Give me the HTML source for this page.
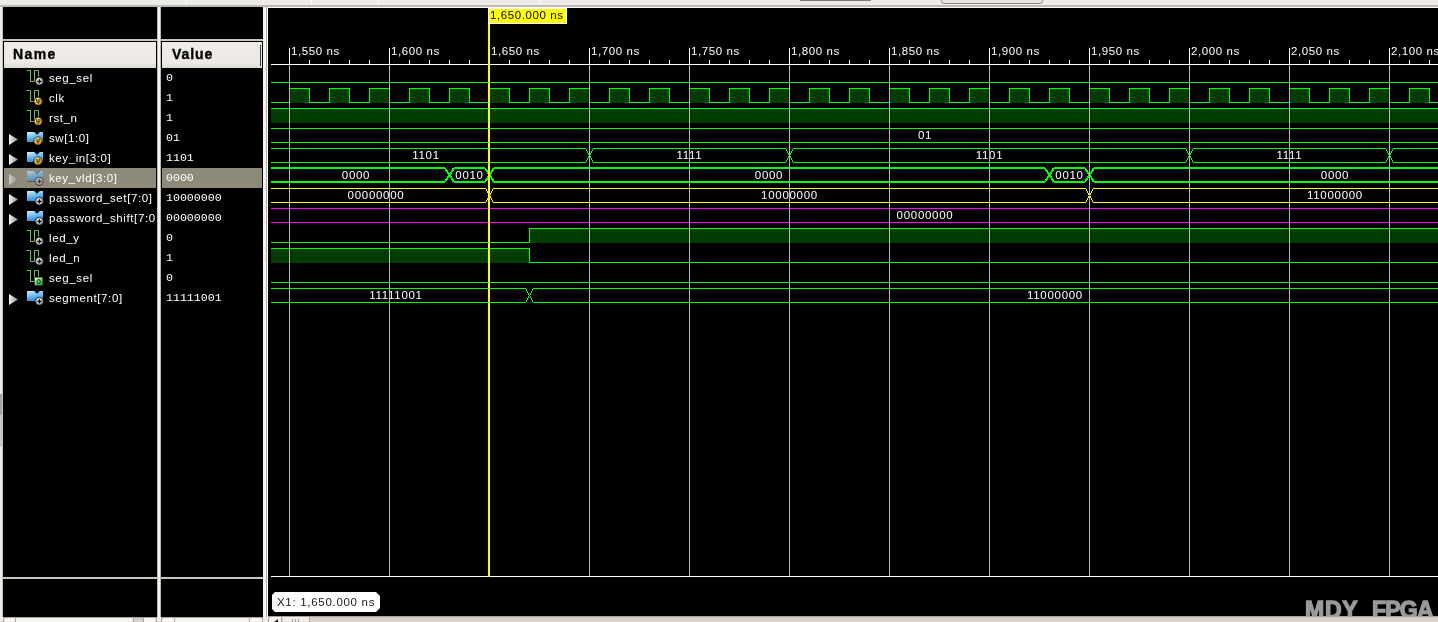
<!DOCTYPE html>
<html><head><meta charset="utf-8"><style>
html,body{margin:0;padding:0;background:#edebe7;}
body{width:1438px;height:622px;position:relative;overflow:hidden;will-change:transform;background:#edebe7;font-family:"Liberation Sans",sans-serif;}
.a{position:absolute;}
.blk{position:absolute;background:#000;}
.hdr{position:absolute;background:linear-gradient(#efece8 0%,#edeae6 80%,#dcd8d2 100%);border:1px solid #000;box-sizing:border-box;font-weight:bold;font-size:14px;color:#000;-webkit-text-stroke:0.35px #000;}
.nm{position:absolute;left:49px;height:20px;line-height:20px;font-size:11.5px;letter-spacing:0.6px;color:#fff;white-space:pre;}
.vl{position:absolute;left:166px;height:20px;line-height:20px;font-family:"Liberation Mono",monospace;font-size:11.6px;color:#fff;white-space:pre;}
.ic{position:absolute;}
.tl{position:absolute;top:43px;height:16px;line-height:16px;font-size:11.5px;letter-spacing:0.6px;color:#fff;white-space:pre;}
.bl{font-family:"Liberation Sans",sans-serif;font-size:11.5px;letter-spacing:0.7px;fill:#fff;}
</style></head><body>
<!-- top band -->
<div class="a" style="left:0;top:0;width:1438px;height:6px;background:#edebe7"></div>
<div class="a" style="left:0;top:5px;width:1438px;height:2px;background:#bdb9b3"></div>
<div class="a" style="left:186px;top:0;width:1px;height:5px;background:#fbfaf8"></div>
<div class="a" style="left:311px;top:0;width:1px;height:5px;background:#fbfaf8"></div>
<div class="a" style="left:378px;top:0;width:1px;height:5px;background:#fbfaf8"></div>
<div class="a" style="left:539px;top:0;width:1px;height:5px;background:#fbfaf8"></div>
<div class="a" style="left:800px;top:0;width:71px;height:1px;background:#7d7a74"></div>
<div class="a" style="left:941px;top:-4px;width:100px;height:6px;border:1px solid #8f8b85;border-radius:3px;background:#e8e5e0"></div>

<!-- left window edge -->
<div class="a" style="left:0;top:394px;width:2px;height:21px;background:#aaa69f"></div>
<div class="a" style="left:0;top:415px;width:2px;height:32px;background:#cdc9c3"></div>
<div class="a" style="left:2px;top:7px;width:1px;height:610px;background:#c8c4be"></div>

<!-- Name panel -->
<div class="blk" style="left:3px;top:7px;width:154px;height:610px"></div>
<div class="a" style="left:3px;top:39px;width:154px;height:2px;background:#c8c4be"></div>
<div class="hdr" style="left:3px;top:41px;width:154px;height:28px;"><span class="a" style="left:9px;top:4px;letter-spacing:1.4px">Name</span></div>
<div class="a" style="left:3px;top:577px;width:154px;height:2px;background:#c8c4be"></div>
<!-- separator -->
<div class="a" style="left:157px;top:7px;width:4px;height:611px;background:linear-gradient(90deg,#bdb9b3 0,#bdb9b3 25%,#f5f3f0 25%,#f5f3f0 75%,#bdb9b3 75%)"></div>

<!-- Value panel -->
<div class="blk" style="left:161px;top:7px;width:102px;height:610px"></div>
<div class="a" style="left:161px;top:39px;width:102px;height:2px;background:#c8c4be"></div>
<div class="hdr" style="left:161px;top:41px;width:102px;height:28px;"><span class="a" style="left:10px;top:4px;letter-spacing:0.9px">Value</span></div>
<div class="a" style="left:260px;top:45px;width:1px;height:21px;background:#3a3a3a"></div>
<div class="a" style="left:161px;top:577px;width:102px;height:2px;background:#c8c4be"></div>
<!-- separator 2 -->
<div class="a" style="left:263px;top:7px;width:3px;height:610px;background:#f5f3f0"></div>
<div class="a" style="left:266px;top:7px;width:1px;height:610px;background:#b0aca6"></div>

<svg width="0" height="0" style="position:absolute"><defs><radialGradient id="gy" cx="0.3" cy="0.25" r="0.8"><stop offset="0" stop-color="#ffffff"/><stop offset="0.35" stop-color="#ffd84a"/><stop offset="1" stop-color="#e89800"/></radialGradient><radialGradient id="gs" cx="0.35" cy="0.3" r="0.8"><stop offset="0" stop-color="#f4f4f4"/><stop offset="0.6" stop-color="#b8b8b8"/><stop offset="1" stop-color="#7a7a7a"/></radialGradient><linearGradient id="gg" x1="0" y1="0" x2="0.6" y2="1"><stop offset="0" stop-color="#f0fff0"/><stop offset="0.5" stop-color="#7ee07e"/><stop offset="1" stop-color="#22b822"/></linearGradient><linearGradient id="gb" x1="0" y1="0" x2="0.3" y2="1"><stop offset="0" stop-color="#d6f2ff"/><stop offset="0.45" stop-color="#7cc4f4"/><stop offset="1" stop-color="#2e90e0"/></linearGradient><linearGradient id="gt" x1="0" y1="0" x2="1" y2="0"><stop offset="0" stop-color="#f4f4f4"/><stop offset="1" stop-color="#8c8c8c"/></linearGradient></defs></svg>
<!-- selection -->
<div class="a" style="left:4px;top:168px;width:152px;height:20px;background:#8e8a79"></div>
<div class="a" style="left:162px;top:168px;width:100px;height:20px;background:#8e8a79"></div>

<div class="a" style="left:0;top:0;width:155px;height:622px;overflow:hidden"><svg class="ic" style="left:20px;top:68px" width="30" height="20"><path d="M7,2.5 L10.5,2.5 L10.5,13.5 L14.5,13.5 L14.5,2.5 L18.5,2.5 L18.5,8.5" fill="none" stroke="#6cc050" stroke-width="1"/><circle cx="19.4" cy="13.3" r="4.6" fill="#000" opacity="0.55"/><circle cx="19.4" cy="13.3" r="3.8" fill="url(#gs)" stroke="#303030" stroke-width="0.6"/><path d="M17.4,13.3 L21.4,13.3 M19.4,11.3 L19.4,15.3" stroke="#000" stroke-width="1.3"/></svg><div class="nm" style="top:68px">seg_sel</div><svg class="ic" style="left:20px;top:88px" width="30" height="20"><path d="M7,2.5 L10.5,2.5 L10.5,13.5 L14.5,13.5 L14.5,2.5 L18.5,2.5 L18.5,8.5" fill="none" stroke="#6cc050" stroke-width="1"/><circle cx="18.2" cy="13.3" r="4.6" fill="#000" opacity="0.55"/><circle cx="18.2" cy="13.3" r="3.8" fill="url(#gy)" stroke="#5a4a20" stroke-width="0.5"/><path d="M16.5,11.0 L16.5,13.0 Q16.5,14.3 18.2,14.3 Q19.9,14.3 19.9,13.0 L19.9,11.0 M18.2,11.0 L18.2,15.9" fill="none" stroke="#2a2a2a" stroke-width="0.9"/></svg><div class="nm" style="top:88px">clk</div><svg class="ic" style="left:20px;top:108px" width="30" height="20"><path d="M7,2.5 L10.5,2.5 L10.5,13.5 L14.5,13.5 L14.5,2.5 L18.5,2.5 L18.5,8.5" fill="none" stroke="#6cc050" stroke-width="1"/><circle cx="18.2" cy="13.3" r="4.6" fill="#000" opacity="0.55"/><circle cx="18.2" cy="13.3" r="3.8" fill="url(#gy)" stroke="#5a4a20" stroke-width="0.5"/><path d="M16.5,11.0 L16.5,13.0 Q16.5,14.3 18.2,14.3 Q19.9,14.3 19.9,13.0 L19.9,11.0 M18.2,11.0 L18.2,15.9" fill="none" stroke="#2a2a2a" stroke-width="0.9"/></svg><div class="nm" style="top:108px">rst_n</div><svg class="ic" style="left:5px;top:128px;opacity:1" width="45" height="20"><path d="M4,6 L4,17 L13,11.5 Z" fill="url(#gt)"/><path d="M22,4 L29.3,4 L32,6.6 L34.7,4 L38,4 L38,14 L22,14 Z" fill="url(#gb)"/><path d="M29.3,4 L32,6.6 L34.7,4" fill="none" stroke="#1c5a90" stroke-width="0.9"/><rect x="22" y="14" width="16" height="1" fill="#000" opacity="0.6"/><circle cx="32.9" cy="12.9" r="4.6" fill="#000" opacity="0.55"/><circle cx="32.9" cy="12.9" r="3.8" fill="url(#gy)" stroke="#5a4a20" stroke-width="0.5"/><path d="M31.2,10.600000000000001 L31.2,12.6 Q31.2,13.9 32.9,13.9 Q34.6,13.9 34.6,12.6 L34.6,10.600000000000001 M32.9,10.600000000000001 L32.9,15.5" fill="none" stroke="#2a2a2a" stroke-width="0.9"/></svg><div class="nm" style="top:128px">sw[1:0]</div><svg class="ic" style="left:5px;top:148px;opacity:1" width="45" height="20"><path d="M4,6 L4,17 L13,11.5 Z" fill="url(#gt)"/><path d="M22,4 L29.3,4 L32,6.6 L34.7,4 L38,4 L38,14 L22,14 Z" fill="url(#gb)"/><path d="M29.3,4 L32,6.6 L34.7,4" fill="none" stroke="#1c5a90" stroke-width="0.9"/><rect x="22" y="14" width="16" height="1" fill="#000" opacity="0.6"/><circle cx="32.9" cy="12.9" r="4.6" fill="#000" opacity="0.55"/><circle cx="32.9" cy="12.9" r="3.8" fill="url(#gy)" stroke="#5a4a20" stroke-width="0.5"/><path d="M31.2,10.600000000000001 L31.2,12.6 Q31.2,13.9 32.9,13.9 Q34.6,13.9 34.6,12.6 L34.6,10.600000000000001 M32.9,10.600000000000001 L32.9,15.5" fill="none" stroke="#2a2a2a" stroke-width="0.9"/></svg><div class="nm" style="top:148px">key_in[3:0]</div><svg class="ic" style="left:5px;top:168px;opacity:0.62" width="45" height="20"><path d="M4,6 L4,17 L13,11.5 Z" fill="url(#gt)"/><path d="M22,3 L29.3,3 L32,5.6 L34.7,3 L38,3 L38,13 L22,13 Z" fill="url(#gb)"/><path d="M29.3,3 L32,5.6 L34.7,3" fill="none" stroke="#1c5a90" stroke-width="0.9"/><rect x="22" y="13" width="16" height="1" fill="#000" opacity="0.6"/><circle cx="34.4" cy="13.3" r="4.6" fill="#000" opacity="0.55"/><circle cx="34.4" cy="13.3" r="3.8" fill="url(#gs)" stroke="#303030" stroke-width="0.6"/><path d="M32.4,13.3 L36.4,13.3 M34.4,11.3 L34.4,15.3" stroke="#000" stroke-width="1.3"/></svg><div class="nm" style="top:168px">key_vld[3:0]</div><svg class="ic" style="left:5px;top:188px;opacity:1" width="45" height="20"><path d="M4,6 L4,17 L13,11.5 Z" fill="url(#gt)"/><path d="M22,3 L29.3,3 L32,5.6 L34.7,3 L38,3 L38,13 L22,13 Z" fill="url(#gb)"/><path d="M29.3,3 L32,5.6 L34.7,3" fill="none" stroke="#1c5a90" stroke-width="0.9"/><rect x="22" y="13" width="16" height="1" fill="#000" opacity="0.6"/><circle cx="34.4" cy="13.3" r="4.6" fill="#000" opacity="0.55"/><circle cx="34.4" cy="13.3" r="3.8" fill="url(#gs)" stroke="#303030" stroke-width="0.6"/><path d="M32.4,13.3 L36.4,13.3 M34.4,11.3 L34.4,15.3" stroke="#000" stroke-width="1.3"/></svg><div class="nm" style="top:188px">password_set[7:0]</div><svg class="ic" style="left:5px;top:208px;opacity:1" width="45" height="20"><path d="M4,6 L4,17 L13,11.5 Z" fill="url(#gt)"/><path d="M22,3 L29.3,3 L32,5.6 L34.7,3 L38,3 L38,13 L22,13 Z" fill="url(#gb)"/><path d="M29.3,3 L32,5.6 L34.7,3" fill="none" stroke="#1c5a90" stroke-width="0.9"/><rect x="22" y="13" width="16" height="1" fill="#000" opacity="0.6"/><circle cx="34.4" cy="13.3" r="4.6" fill="#000" opacity="0.55"/><circle cx="34.4" cy="13.3" r="3.8" fill="url(#gs)" stroke="#303030" stroke-width="0.6"/><path d="M32.4,13.3 L36.4,13.3 M34.4,11.3 L34.4,15.3" stroke="#000" stroke-width="1.3"/></svg><div class="nm" style="top:208px">password_shift[7:0]</div><svg class="ic" style="left:20px;top:228px" width="30" height="20"><path d="M7,2.5 L10.5,2.5 L10.5,13.5 L14.5,13.5 L14.5,2.5 L18.5,2.5 L18.5,8.5" fill="none" stroke="#6cc050" stroke-width="1"/><circle cx="19.4" cy="13.3" r="4.6" fill="#000" opacity="0.55"/><circle cx="19.4" cy="13.3" r="3.8" fill="url(#gs)" stroke="#303030" stroke-width="0.6"/><path d="M17.4,13.3 L21.4,13.3 M19.4,11.3 L19.4,15.3" stroke="#000" stroke-width="1.3"/></svg><div class="nm" style="top:228px">led_y</div><svg class="ic" style="left:20px;top:248px" width="30" height="20"><path d="M7,2.5 L10.5,2.5 L10.5,13.5 L14.5,13.5 L14.5,2.5 L18.5,2.5 L18.5,8.5" fill="none" stroke="#6cc050" stroke-width="1"/><circle cx="19.4" cy="13.3" r="4.6" fill="#000" opacity="0.55"/><circle cx="19.4" cy="13.3" r="3.8" fill="url(#gs)" stroke="#303030" stroke-width="0.6"/><path d="M17.4,13.3 L21.4,13.3 M19.4,11.3 L19.4,15.3" stroke="#000" stroke-width="1.3"/></svg><div class="nm" style="top:248px">led_n</div><svg class="ic" style="left:20px;top:268px" width="30" height="20"><path d="M7,2.5 L10.5,2.5 L10.5,13.5 L14.5,13.5 L14.5,2.5 L18.5,2.5 L18.5,8.5" fill="none" stroke="#6cc050" stroke-width="1"/><rect x="14.1" y="8.700000000000001" width="9.2" height="9.2" fill="#000" opacity="0.5"/><rect x="14.7" y="9.3" width="8" height="8" fill="url(#gg)" stroke="#404040" stroke-width="0.5"/><ellipse cx="18.7" cy="13.600000000000001" rx="1.5" ry="2.2" fill="none" stroke="#1a1a1a" stroke-width="0.9"/></svg><div class="nm" style="top:268px">seg_sel</div><svg class="ic" style="left:5px;top:288px;opacity:1" width="45" height="20"><path d="M4,6 L4,17 L13,11.5 Z" fill="url(#gt)"/><path d="M22,3 L29.3,3 L32,5.6 L34.7,3 L38,3 L38,13 L22,13 Z" fill="url(#gb)"/><path d="M29.3,3 L32,5.6 L34.7,3" fill="none" stroke="#1c5a90" stroke-width="0.9"/><rect x="22" y="13" width="16" height="1" fill="#000" opacity="0.6"/><circle cx="34.4" cy="13.3" r="4.6" fill="#000" opacity="0.55"/><circle cx="34.4" cy="13.3" r="3.8" fill="url(#gs)" stroke="#303030" stroke-width="0.6"/><path d="M32.4,13.3 L36.4,13.3 M34.4,11.3 L34.4,15.3" stroke="#000" stroke-width="1.3"/></svg><div class="nm" style="top:288px">segment[7:0]</div></div>
<div class="vl" style="top:68px">0</div><div class="vl" style="top:88px">1</div><div class="vl" style="top:108px">1</div><div class="vl" style="top:128px">01</div><div class="vl" style="top:148px">1101</div><div class="vl" style="top:168px">0000</div><div class="vl" style="top:188px">10000000</div><div class="vl" style="top:208px">00000000</div><div class="vl" style="top:228px">0</div><div class="vl" style="top:248px">1</div><div class="vl" style="top:268px">0</div><div class="vl" style="top:288px">11111001</div>

<!-- waveform panel -->
<div class="a" style="left:267px;top:7px;width:1171px;height:610px;background:#fbfaf8"></div>
<div class="blk" style="left:268px;top:8px;width:1170px;height:608px"></div>
<div class="tl" style="left:291px">1,550 ns</div><div class="tl" style="left:391px">1,600 ns</div><div class="tl" style="left:491px">1,650 ns</div><div class="tl" style="left:591px">1,700 ns</div><div class="tl" style="left:691px">1,750 ns</div><div class="tl" style="left:791px">1,800 ns</div><div class="tl" style="left:891px">1,850 ns</div><div class="tl" style="left:991px">1,900 ns</div><div class="tl" style="left:1091px">1,950 ns</div><div class="tl" style="left:1191px">2,000 ns</div><div class="tl" style="left:1291px">2,050 ns</div><div class="tl" style="left:1391px">2,100 ns</div>
<svg class="a" style="left:0;top:0" width="1438" height="622" shape-rendering="crispEdges">
<rect x="271" y="64" width="1167" height="1" fill="#ffffff"/>
<rect x="289" y="48" width="1" height="16" fill="#ffffff"/>
<rect x="309" y="60" width="1" height="4" fill="#ffffff"/>
<rect x="329" y="60" width="1" height="4" fill="#ffffff"/>
<rect x="349" y="60" width="1" height="4" fill="#ffffff"/>
<rect x="369" y="60" width="1" height="4" fill="#ffffff"/>
<rect x="389" y="48" width="1" height="16" fill="#ffffff"/>
<rect x="409" y="60" width="1" height="4" fill="#ffffff"/>
<rect x="429" y="60" width="1" height="4" fill="#ffffff"/>
<rect x="449" y="60" width="1" height="4" fill="#ffffff"/>
<rect x="469" y="60" width="1" height="4" fill="#ffffff"/>
<rect x="489" y="48" width="1" height="16" fill="#ffffff"/>
<rect x="509" y="60" width="1" height="4" fill="#ffffff"/>
<rect x="529" y="60" width="1" height="4" fill="#ffffff"/>
<rect x="549" y="60" width="1" height="4" fill="#ffffff"/>
<rect x="569" y="60" width="1" height="4" fill="#ffffff"/>
<rect x="589" y="48" width="1" height="16" fill="#ffffff"/>
<rect x="609" y="60" width="1" height="4" fill="#ffffff"/>
<rect x="629" y="60" width="1" height="4" fill="#ffffff"/>
<rect x="649" y="60" width="1" height="4" fill="#ffffff"/>
<rect x="669" y="60" width="1" height="4" fill="#ffffff"/>
<rect x="689" y="48" width="1" height="16" fill="#ffffff"/>
<rect x="709" y="60" width="1" height="4" fill="#ffffff"/>
<rect x="729" y="60" width="1" height="4" fill="#ffffff"/>
<rect x="749" y="60" width="1" height="4" fill="#ffffff"/>
<rect x="769" y="60" width="1" height="4" fill="#ffffff"/>
<rect x="789" y="48" width="1" height="16" fill="#ffffff"/>
<rect x="809" y="60" width="1" height="4" fill="#ffffff"/>
<rect x="829" y="60" width="1" height="4" fill="#ffffff"/>
<rect x="849" y="60" width="1" height="4" fill="#ffffff"/>
<rect x="869" y="60" width="1" height="4" fill="#ffffff"/>
<rect x="889" y="48" width="1" height="16" fill="#ffffff"/>
<rect x="909" y="60" width="1" height="4" fill="#ffffff"/>
<rect x="929" y="60" width="1" height="4" fill="#ffffff"/>
<rect x="949" y="60" width="1" height="4" fill="#ffffff"/>
<rect x="969" y="60" width="1" height="4" fill="#ffffff"/>
<rect x="989" y="48" width="1" height="16" fill="#ffffff"/>
<rect x="1009" y="60" width="1" height="4" fill="#ffffff"/>
<rect x="1029" y="60" width="1" height="4" fill="#ffffff"/>
<rect x="1049" y="60" width="1" height="4" fill="#ffffff"/>
<rect x="1069" y="60" width="1" height="4" fill="#ffffff"/>
<rect x="1089" y="48" width="1" height="16" fill="#ffffff"/>
<rect x="1109" y="60" width="1" height="4" fill="#ffffff"/>
<rect x="1129" y="60" width="1" height="4" fill="#ffffff"/>
<rect x="1149" y="60" width="1" height="4" fill="#ffffff"/>
<rect x="1169" y="60" width="1" height="4" fill="#ffffff"/>
<rect x="1189" y="48" width="1" height="16" fill="#ffffff"/>
<rect x="1209" y="60" width="1" height="4" fill="#ffffff"/>
<rect x="1229" y="60" width="1" height="4" fill="#ffffff"/>
<rect x="1249" y="60" width="1" height="4" fill="#ffffff"/>
<rect x="1269" y="60" width="1" height="4" fill="#ffffff"/>
<rect x="1289" y="48" width="1" height="16" fill="#ffffff"/>
<rect x="1309" y="60" width="1" height="4" fill="#ffffff"/>
<rect x="1329" y="60" width="1" height="4" fill="#ffffff"/>
<rect x="1349" y="60" width="1" height="4" fill="#ffffff"/>
<rect x="1369" y="60" width="1" height="4" fill="#ffffff"/>
<rect x="1389" y="48" width="1" height="16" fill="#ffffff"/>
<rect x="1409" y="60" width="1" height="4" fill="#ffffff"/>
<rect x="1429" y="60" width="1" height="4" fill="#ffffff"/>
<rect x="271" y="82" width="1167" height="1" fill="#00ff00"/>
<rect x="271" y="102" width="18" height="1" fill="#00ff00"/>
<rect x="289" y="89" width="20" height="14" fill="#003c00"/>
<rect x="289" y="88" width="20" height="1" fill="#00ff00"/>
<rect x="289" y="88" width="1" height="15" fill="#00ff00"/>
<rect x="309" y="102" width="20" height="1" fill="#00ff00"/>
<rect x="309" y="88" width="1" height="15" fill="#00ff00"/>
<rect x="329" y="89" width="20" height="14" fill="#003c00"/>
<rect x="329" y="88" width="20" height="1" fill="#00ff00"/>
<rect x="329" y="88" width="1" height="15" fill="#00ff00"/>
<rect x="349" y="102" width="20" height="1" fill="#00ff00"/>
<rect x="349" y="88" width="1" height="15" fill="#00ff00"/>
<rect x="369" y="89" width="20" height="14" fill="#003c00"/>
<rect x="369" y="88" width="20" height="1" fill="#00ff00"/>
<rect x="369" y="88" width="1" height="15" fill="#00ff00"/>
<rect x="389" y="102" width="20" height="1" fill="#00ff00"/>
<rect x="389" y="88" width="1" height="15" fill="#00ff00"/>
<rect x="409" y="89" width="20" height="14" fill="#003c00"/>
<rect x="409" y="88" width="20" height="1" fill="#00ff00"/>
<rect x="409" y="88" width="1" height="15" fill="#00ff00"/>
<rect x="429" y="102" width="20" height="1" fill="#00ff00"/>
<rect x="429" y="88" width="1" height="15" fill="#00ff00"/>
<rect x="449" y="89" width="20" height="14" fill="#003c00"/>
<rect x="449" y="88" width="20" height="1" fill="#00ff00"/>
<rect x="449" y="88" width="1" height="15" fill="#00ff00"/>
<rect x="469" y="102" width="20" height="1" fill="#00ff00"/>
<rect x="469" y="88" width="1" height="15" fill="#00ff00"/>
<rect x="489" y="89" width="20" height="14" fill="#003c00"/>
<rect x="489" y="88" width="20" height="1" fill="#00ff00"/>
<rect x="489" y="88" width="1" height="15" fill="#00ff00"/>
<rect x="509" y="102" width="20" height="1" fill="#00ff00"/>
<rect x="509" y="88" width="1" height="15" fill="#00ff00"/>
<rect x="529" y="89" width="20" height="14" fill="#003c00"/>
<rect x="529" y="88" width="20" height="1" fill="#00ff00"/>
<rect x="529" y="88" width="1" height="15" fill="#00ff00"/>
<rect x="549" y="102" width="20" height="1" fill="#00ff00"/>
<rect x="549" y="88" width="1" height="15" fill="#00ff00"/>
<rect x="569" y="89" width="20" height="14" fill="#003c00"/>
<rect x="569" y="88" width="20" height="1" fill="#00ff00"/>
<rect x="569" y="88" width="1" height="15" fill="#00ff00"/>
<rect x="589" y="102" width="20" height="1" fill="#00ff00"/>
<rect x="589" y="88" width="1" height="15" fill="#00ff00"/>
<rect x="609" y="89" width="20" height="14" fill="#003c00"/>
<rect x="609" y="88" width="20" height="1" fill="#00ff00"/>
<rect x="609" y="88" width="1" height="15" fill="#00ff00"/>
<rect x="629" y="102" width="20" height="1" fill="#00ff00"/>
<rect x="629" y="88" width="1" height="15" fill="#00ff00"/>
<rect x="649" y="89" width="20" height="14" fill="#003c00"/>
<rect x="649" y="88" width="20" height="1" fill="#00ff00"/>
<rect x="649" y="88" width="1" height="15" fill="#00ff00"/>
<rect x="669" y="102" width="20" height="1" fill="#00ff00"/>
<rect x="669" y="88" width="1" height="15" fill="#00ff00"/>
<rect x="689" y="89" width="20" height="14" fill="#003c00"/>
<rect x="689" y="88" width="20" height="1" fill="#00ff00"/>
<rect x="689" y="88" width="1" height="15" fill="#00ff00"/>
<rect x="709" y="102" width="20" height="1" fill="#00ff00"/>
<rect x="709" y="88" width="1" height="15" fill="#00ff00"/>
<rect x="729" y="89" width="20" height="14" fill="#003c00"/>
<rect x="729" y="88" width="20" height="1" fill="#00ff00"/>
<rect x="729" y="88" width="1" height="15" fill="#00ff00"/>
<rect x="749" y="102" width="20" height="1" fill="#00ff00"/>
<rect x="749" y="88" width="1" height="15" fill="#00ff00"/>
<rect x="769" y="89" width="20" height="14" fill="#003c00"/>
<rect x="769" y="88" width="20" height="1" fill="#00ff00"/>
<rect x="769" y="88" width="1" height="15" fill="#00ff00"/>
<rect x="789" y="102" width="20" height="1" fill="#00ff00"/>
<rect x="789" y="88" width="1" height="15" fill="#00ff00"/>
<rect x="809" y="89" width="20" height="14" fill="#003c00"/>
<rect x="809" y="88" width="20" height="1" fill="#00ff00"/>
<rect x="809" y="88" width="1" height="15" fill="#00ff00"/>
<rect x="829" y="102" width="20" height="1" fill="#00ff00"/>
<rect x="829" y="88" width="1" height="15" fill="#00ff00"/>
<rect x="849" y="89" width="20" height="14" fill="#003c00"/>
<rect x="849" y="88" width="20" height="1" fill="#00ff00"/>
<rect x="849" y="88" width="1" height="15" fill="#00ff00"/>
<rect x="869" y="102" width="20" height="1" fill="#00ff00"/>
<rect x="869" y="88" width="1" height="15" fill="#00ff00"/>
<rect x="889" y="89" width="20" height="14" fill="#003c00"/>
<rect x="889" y="88" width="20" height="1" fill="#00ff00"/>
<rect x="889" y="88" width="1" height="15" fill="#00ff00"/>
<rect x="909" y="102" width="20" height="1" fill="#00ff00"/>
<rect x="909" y="88" width="1" height="15" fill="#00ff00"/>
<rect x="929" y="89" width="20" height="14" fill="#003c00"/>
<rect x="929" y="88" width="20" height="1" fill="#00ff00"/>
<rect x="929" y="88" width="1" height="15" fill="#00ff00"/>
<rect x="949" y="102" width="20" height="1" fill="#00ff00"/>
<rect x="949" y="88" width="1" height="15" fill="#00ff00"/>
<rect x="969" y="89" width="20" height="14" fill="#003c00"/>
<rect x="969" y="88" width="20" height="1" fill="#00ff00"/>
<rect x="969" y="88" width="1" height="15" fill="#00ff00"/>
<rect x="989" y="102" width="20" height="1" fill="#00ff00"/>
<rect x="989" y="88" width="1" height="15" fill="#00ff00"/>
<rect x="1009" y="89" width="20" height="14" fill="#003c00"/>
<rect x="1009" y="88" width="20" height="1" fill="#00ff00"/>
<rect x="1009" y="88" width="1" height="15" fill="#00ff00"/>
<rect x="1029" y="102" width="20" height="1" fill="#00ff00"/>
<rect x="1029" y="88" width="1" height="15" fill="#00ff00"/>
<rect x="1049" y="89" width="20" height="14" fill="#003c00"/>
<rect x="1049" y="88" width="20" height="1" fill="#00ff00"/>
<rect x="1049" y="88" width="1" height="15" fill="#00ff00"/>
<rect x="1069" y="102" width="20" height="1" fill="#00ff00"/>
<rect x="1069" y="88" width="1" height="15" fill="#00ff00"/>
<rect x="1089" y="89" width="20" height="14" fill="#003c00"/>
<rect x="1089" y="88" width="20" height="1" fill="#00ff00"/>
<rect x="1089" y="88" width="1" height="15" fill="#00ff00"/>
<rect x="1109" y="102" width="20" height="1" fill="#00ff00"/>
<rect x="1109" y="88" width="1" height="15" fill="#00ff00"/>
<rect x="1129" y="89" width="20" height="14" fill="#003c00"/>
<rect x="1129" y="88" width="20" height="1" fill="#00ff00"/>
<rect x="1129" y="88" width="1" height="15" fill="#00ff00"/>
<rect x="1149" y="102" width="20" height="1" fill="#00ff00"/>
<rect x="1149" y="88" width="1" height="15" fill="#00ff00"/>
<rect x="1169" y="89" width="20" height="14" fill="#003c00"/>
<rect x="1169" y="88" width="20" height="1" fill="#00ff00"/>
<rect x="1169" y="88" width="1" height="15" fill="#00ff00"/>
<rect x="1189" y="102" width="20" height="1" fill="#00ff00"/>
<rect x="1189" y="88" width="1" height="15" fill="#00ff00"/>
<rect x="1209" y="89" width="20" height="14" fill="#003c00"/>
<rect x="1209" y="88" width="20" height="1" fill="#00ff00"/>
<rect x="1209" y="88" width="1" height="15" fill="#00ff00"/>
<rect x="1229" y="102" width="20" height="1" fill="#00ff00"/>
<rect x="1229" y="88" width="1" height="15" fill="#00ff00"/>
<rect x="1249" y="89" width="20" height="14" fill="#003c00"/>
<rect x="1249" y="88" width="20" height="1" fill="#00ff00"/>
<rect x="1249" y="88" width="1" height="15" fill="#00ff00"/>
<rect x="1269" y="102" width="20" height="1" fill="#00ff00"/>
<rect x="1269" y="88" width="1" height="15" fill="#00ff00"/>
<rect x="1289" y="89" width="20" height="14" fill="#003c00"/>
<rect x="1289" y="88" width="20" height="1" fill="#00ff00"/>
<rect x="1289" y="88" width="1" height="15" fill="#00ff00"/>
<rect x="1309" y="102" width="20" height="1" fill="#00ff00"/>
<rect x="1309" y="88" width="1" height="15" fill="#00ff00"/>
<rect x="1329" y="89" width="20" height="14" fill="#003c00"/>
<rect x="1329" y="88" width="20" height="1" fill="#00ff00"/>
<rect x="1329" y="88" width="1" height="15" fill="#00ff00"/>
<rect x="1349" y="102" width="20" height="1" fill="#00ff00"/>
<rect x="1349" y="88" width="1" height="15" fill="#00ff00"/>
<rect x="1369" y="89" width="20" height="14" fill="#003c00"/>
<rect x="1369" y="88" width="20" height="1" fill="#00ff00"/>
<rect x="1369" y="88" width="1" height="15" fill="#00ff00"/>
<rect x="1389" y="102" width="20" height="1" fill="#00ff00"/>
<rect x="1389" y="88" width="1" height="15" fill="#00ff00"/>
<rect x="1409" y="89" width="20" height="14" fill="#003c00"/>
<rect x="1409" y="88" width="20" height="1" fill="#00ff00"/>
<rect x="1409" y="88" width="1" height="15" fill="#00ff00"/>
<rect x="1429" y="102" width="9" height="1" fill="#00ff00"/>
<rect x="1429" y="88" width="1" height="15" fill="#00ff00"/>
<rect x="271" y="109" width="1167" height="14" fill="#003c00"/>
<rect x="271" y="108" width="1167" height="1" fill="#00ff00"/>
<rect x="271" y="128" width="1167" height="1" fill="#00ff00"/>
<rect x="271" y="142" width="1167" height="1" fill="#00ff00"/>
<rect x="271" y="148" width="315" height="1" fill="#00ff00"/>
<rect x="271" y="162" width="315" height="1" fill="#00ff00"/>
<rect x="593" y="148" width="193" height="1" fill="#00ff00"/>
<rect x="593" y="162" width="193" height="1" fill="#00ff00"/>
<rect x="793" y="148" width="393" height="1" fill="#00ff00"/>
<rect x="793" y="162" width="393" height="1" fill="#00ff00"/>
<rect x="1193" y="148" width="193" height="1" fill="#00ff00"/>
<rect x="1193" y="162" width="193" height="1" fill="#00ff00"/>
<rect x="1393" y="148" width="45" height="1" fill="#00ff00"/>
<rect x="1393" y="162" width="45" height="1" fill="#00ff00"/>
<path d="M586,149h1v2h-1z M592,149h1v2h-1z M587,151h1v2h-1z M591,151h1v2h-1z M588,153h1v2h-1z M590,153h1v2h-1z M589,155h1v1h-1z M588,156h1v2h-1z M590,156h1v2h-1z M587,158h1v2h-1z M591,158h1v2h-1z M586,160h1v2h-1z M592,160h1v2h-1z M786,149h1v2h-1z M792,149h1v2h-1z M787,151h1v2h-1z M791,151h1v2h-1z M788,153h1v2h-1z M790,153h1v2h-1z M789,155h1v1h-1z M788,156h1v2h-1z M790,156h1v2h-1z M787,158h1v2h-1z M791,158h1v2h-1z M786,160h1v2h-1z M792,160h1v2h-1z M1186,149h1v2h-1z M1192,149h1v2h-1z M1187,151h1v2h-1z M1191,151h1v2h-1z M1188,153h1v2h-1z M1190,153h1v2h-1z M1189,155h1v1h-1z M1188,156h1v2h-1z M1190,156h1v2h-1z M1187,158h1v2h-1z M1191,158h1v2h-1z M1186,160h1v2h-1z M1192,160h1v2h-1z M1386,149h1v2h-1z M1392,149h1v2h-1z M1387,151h1v2h-1z M1391,151h1v2h-1z M1388,153h1v2h-1z M1390,153h1v2h-1z M1389,155h1v1h-1z M1388,156h1v2h-1z M1390,156h1v2h-1z M1387,158h1v2h-1z M1391,158h1v2h-1z M1386,160h1v2h-1z M1392,160h1v2h-1z " fill="#00ff00"/>
<path d="M271,168 L445.0,168 M271,182 L445.0,182 M454.0,168 L485.0,168 M454.0,182 L485.0,182 M494.0,168 L1045.0,168 M494.0,182 L1045.0,182 M1054.0,168 L1085.0,168 M1054.0,182 L1085.0,182 M1094.0,168 L1438,168 M1094.0,182 L1438,182 M445.0,168 L454.0,182 M445.0,182 L454.0,168 M485.0,168 L494.0,182 M485.0,182 L494.0,168 M1045.0,168 L1054.0,182 M1045.0,182 L1054.0,168 M1085.0,168 L1094.0,182 M1085.0,182 L1094.0,168 " fill="none" stroke="#00ff00" stroke-width="2" shape-rendering="crispEdges"/>
<rect x="271" y="188" width="215" height="1" fill="#ffff00"/>
<rect x="271" y="202" width="215" height="1" fill="#ffff00"/>
<rect x="493" y="188" width="593" height="1" fill="#ffff00"/>
<rect x="493" y="202" width="593" height="1" fill="#ffff00"/>
<rect x="1093" y="188" width="345" height="1" fill="#ffff00"/>
<rect x="1093" y="202" width="345" height="1" fill="#ffff00"/>
<path d="M486,189h1v2h-1z M492,189h1v2h-1z M487,191h1v2h-1z M491,191h1v2h-1z M488,193h1v2h-1z M490,193h1v2h-1z M489,195h1v1h-1z M488,196h1v2h-1z M490,196h1v2h-1z M487,198h1v2h-1z M491,198h1v2h-1z M486,200h1v2h-1z M492,200h1v2h-1z M1086,189h1v2h-1z M1092,189h1v2h-1z M1087,191h1v2h-1z M1091,191h1v2h-1z M1088,193h1v2h-1z M1090,193h1v2h-1z M1089,195h1v1h-1z M1088,196h1v2h-1z M1090,196h1v2h-1z M1087,198h1v2h-1z M1091,198h1v2h-1z M1086,200h1v2h-1z M1092,200h1v2h-1z " fill="#ffff00"/>
<rect x="271" y="208" width="1167" height="1" fill="#ff00ff"/>
<rect x="271" y="222" width="1167" height="1" fill="#ff00ff"/>
<rect x="271" y="242" width="258" height="1" fill="#00ff00"/>
<rect x="529" y="229" width="909" height="14" fill="#003c00"/>
<rect x="529" y="228" width="909" height="1" fill="#00ff00"/>
<rect x="529" y="228" width="1" height="15" fill="#00ff00"/>
<rect x="271" y="249" width="258" height="14" fill="#003c00"/>
<rect x="271" y="248" width="258" height="1" fill="#00ff00"/>
<rect x="529" y="262" width="909" height="1" fill="#00ff00"/>
<rect x="529" y="248" width="1" height="15" fill="#00ff00"/>
<rect x="271" y="282" width="1167" height="1" fill="#00ff00"/>
<rect x="271" y="288" width="255" height="1" fill="#00ff00"/>
<rect x="271" y="302" width="255" height="1" fill="#00ff00"/>
<rect x="533" y="288" width="905" height="1" fill="#00ff00"/>
<rect x="533" y="302" width="905" height="1" fill="#00ff00"/>
<path d="M526,289h1v2h-1z M532,289h1v2h-1z M527,291h1v2h-1z M531,291h1v2h-1z M528,293h1v2h-1z M530,293h1v2h-1z M529,295h1v1h-1z M528,296h1v2h-1z M530,296h1v2h-1z M527,298h1v2h-1z M531,298h1v2h-1z M526,300h1v2h-1z M532,300h1v2h-1z " fill="#00ff00"/>
<text x="925" y="139" text-anchor="middle" class="bl">01</text>
<text x="426" y="159" text-anchor="middle" class="bl">1101</text>
<text x="689.5" y="159" text-anchor="middle" class="bl">1111</text>
<text x="989.5" y="159" text-anchor="middle" class="bl">1101</text>
<text x="1289.5" y="159" text-anchor="middle" class="bl">1111</text>
<text x="356" y="179" text-anchor="middle" class="bl">0000</text>
<text x="469.5" y="179" text-anchor="middle" class="bl">0010</text>
<text x="769" y="179" text-anchor="middle" class="bl">0000</text>
<text x="1069.5" y="179" text-anchor="middle" class="bl">0010</text>
<text x="1335" y="179" text-anchor="middle" class="bl">0000</text>
<text x="376" y="199" text-anchor="middle" class="bl">00000000</text>
<text x="789.5" y="199" text-anchor="middle" class="bl">10000000</text>
<text x="1335" y="199" text-anchor="middle" class="bl">11000000</text>
<text x="925" y="219" text-anchor="middle" class="bl">00000000</text>
<text x="396" y="299" text-anchor="middle" class="bl">11111001</text>
<text x="1055" y="299" text-anchor="middle" class="bl">11000000</text>
<rect x="289" y="65" width="1" height="511" fill="#b8b8b8"/>
<rect x="389" y="65" width="1" height="511" fill="#b8b8b8"/>
<rect x="489" y="65" width="1" height="511" fill="#b8b8b8"/>
<rect x="589" y="65" width="1" height="511" fill="#b8b8b8"/>
<rect x="689" y="65" width="1" height="511" fill="#b8b8b8"/>
<rect x="789" y="65" width="1" height="511" fill="#b8b8b8"/>
<rect x="889" y="65" width="1" height="511" fill="#b8b8b8"/>
<rect x="989" y="65" width="1" height="511" fill="#b8b8b8"/>
<rect x="1089" y="65" width="1" height="511" fill="#b8b8b8"/>
<rect x="1189" y="65" width="1" height="511" fill="#b8b8b8"/>
<rect x="1289" y="65" width="1" height="511" fill="#b8b8b8"/>
<rect x="1389" y="65" width="1" height="511" fill="#b8b8b8"/>
<rect x="271" y="576" width="1167" height="1" fill="#ffffff"/>
<rect x="488" y="24" width="2" height="553" fill="#ffff00"/>
</svg>
<!-- cursor label -->
<div class="a" style="left:488px;top:8px;width:77px;height:14px;border:1px solid #fff;background:#ffff00;font-size:11.5px;letter-spacing:0.6px;line-height:14px;color:#000;white-space:pre;"><span class="a" style="left:1px;top:-1px">1,650.000 ns</span></div>
<!-- X1 label -->
<svg class="a" style="left:272px;top:592px" width="108" height="20"><path d="M3,0 L104,0 L108,4 L108,16 L104,20 L3,20 L0,17 L0,3 Z" fill="#fff"/></svg>
<div class="a" style="left:277px;top:594px;height:16px;line-height:16px;font-size:11.5px;letter-spacing:0.7px;color:#1a1a1a;white-space:pre">X1: 1,650.000 ns</div>
<!-- watermark -->
<div class="a" style="left:1290px;top:590px;width:148px;height:26px;overflow:hidden">
<div class="a" style="left:15px;top:9px;font-size:23px;font-weight:bold;color:#9a9a9a;-webkit-text-stroke:1.3px #9a9a9a;line-height:23px;white-space:pre;letter-spacing:0.8px">MDY</div>
<div class="a" style="left:82px;top:9px;font-size:23px;font-weight:bold;color:#9a9a9a;-webkit-text-stroke:1.3px #9a9a9a;line-height:23px;white-space:pre;letter-spacing:-0.8px">FPGA</div>
</div>
<!-- bottom scrollbars -->
<div class="a" style="left:0;top:617px;width:268px;height:5px;background:#edebe7"></div>
<div class="a" style="left:3px;top:617px;width:154px;height:5px;background:#d6d0c8;border-top:1px solid #a8a29c;box-sizing:border-box"></div>
<div class="a" style="left:3px;top:618px;width:13px;height:4px;background:#f8f6f4;border-left:1px solid #a8a29c;border-right:1px solid #a8a29c;border-radius:3px 0 0 0;box-sizing:border-box"></div>
<div class="a" style="left:16px;top:618px;width:118px;height:4px;background:#f5f3f0;border-right:1px solid #a8a29c;box-sizing:border-box"></div>
<div class="a" style="left:143px;top:618px;width:14px;height:4px;background:#f8f6f4;border-left:1px solid #a8a29c;border-right:1px solid #a8a29c;border-radius:0 3px 0 0;box-sizing:border-box"></div>
<div class="a" style="left:161px;top:617px;width:102px;height:5px;background:#d6d0c8;border-top:1px solid #a8a29c;box-sizing:border-box"></div>
<div class="a" style="left:161px;top:618px;width:14px;height:4px;background:#f8f6f4;border-left:1px solid #a8a29c;border-right:1px solid #a8a29c;border-radius:3px 0 0 0;box-sizing:border-box"></div>
<div class="a" style="left:175px;top:618px;width:75px;height:4px;background:#f5f3f0;border-right:1px solid #a8a29c;box-sizing:border-box"></div>
<div class="a" style="left:250px;top:618px;width:13px;height:4px;background:#f8f6f4;border-right:1px solid #a8a29c;border-radius:0 3px 0 0;box-sizing:border-box"></div>
<div class="a" style="left:268px;top:616px;width:1170px;height:6px;background:#d8d0c8;border-top:1px solid #a8a29c;box-sizing:border-box"></div>
<div class="a" style="left:268px;top:617px;width:14px;height:5px;background:#f8f6f4;border-left:1px solid #a8a29c;border-right:1px solid #a8a29c;border-radius:3px 0 0 0;box-sizing:border-box"></div>
<div class="a" style="left:274px;top:619px;width:0;height:0;border-right:4px solid #202020;border-top:3px solid transparent;border-bottom:3px solid transparent"></div>
<div class="a" style="left:283px;top:617px;width:27px;height:5px;background:#f0ede9;border-right:1px solid #a8a29c;box-sizing:border-box"></div>
<div class="a" style="left:292px;top:619px;width:1px;height:3px;background:#a8a29c"></div>
<div class="a" style="left:295px;top:619px;width:1px;height:3px;background:#a8a29c"></div>
<div class="a" style="left:298px;top:619px;width:1px;height:3px;background:#a8a29c"></div>
</body></html>
